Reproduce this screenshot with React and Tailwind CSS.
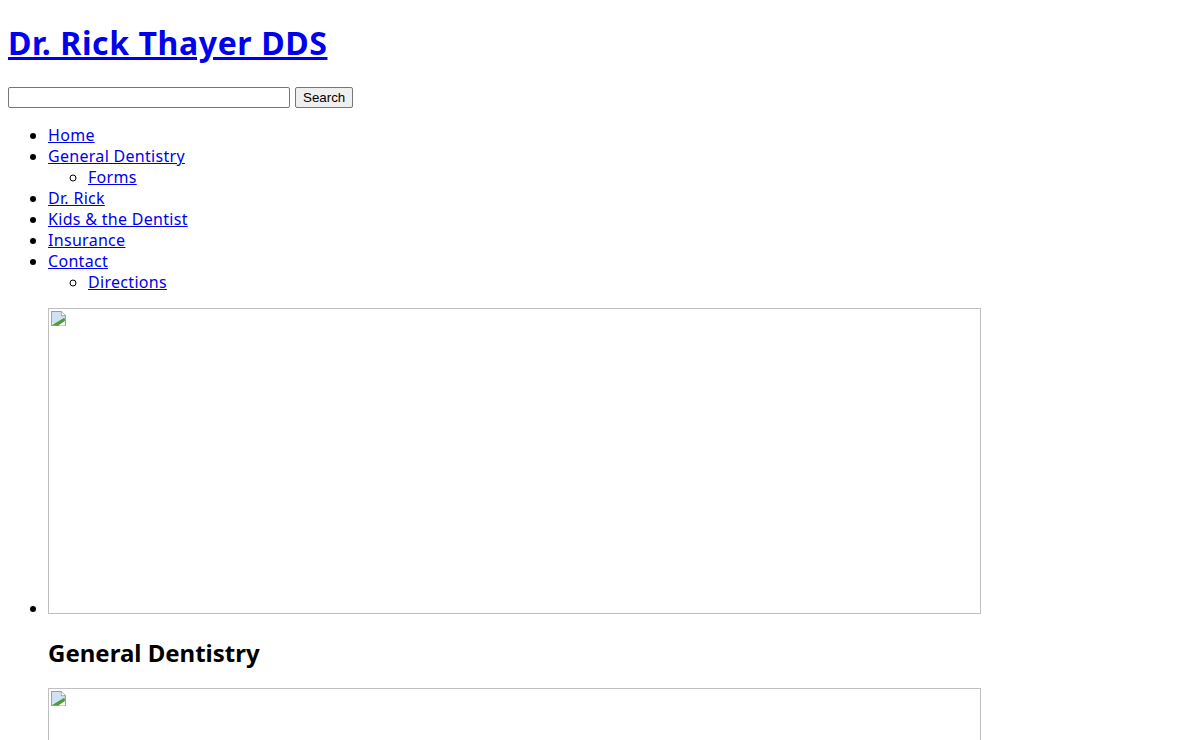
import React from "react";

const font = { fontFamily: "'Noto Sans', 'Open Sans', sans-serif" };

function BrokenImage() {
    return (
        <span className="inline-block align-baseline w-[933px] h-[306px] border border-[#c0c0c0] box-border">
            <svg width="17" height="17" viewBox="0 0 16 16" className="ml-[1px] mt-[1px]">
                <path d="M1.5 1.5h9l4 4v9h-13z" fill="#eef3f8" stroke="#9c9c9c" />
                <path d="M10.5 1.5v4h4" fill="#ffffff" stroke="#9c9c9c" />
                <path d="M2 2h8v4h4v4l-12 3z" fill="#cfe1f3" />
                <path d="M2 14l11-6.5 1 0.5v2.5l-6 4z" fill="#4f9b34" />
                <path d="M8 14.5l6-4v4z" fill="#ffffff" />
            </svg>
        </span>
    );
}

const menus = [
    { title: "Home" },
    { title: "General Dentistry", items: ["Forms"] },
    { title: "Dr. Rick" },
    { title: "Kids & the Dentist" },
    { title: "Insurance" },
    { title: "Contact", items: ["Directions"] },
];

function App() {
    return (
        <div className="m-2 text-black text-[16px] leading-[21px]" style={font}>
            {/* Header */}
            <h1 className="my-[21.44px] text-[32px] leading-[43px] font-bold tracking-[0.6px]">
                <a href="#" className="text-[#0000ee] underline">Dr. Rick Thayer DDS</a>
            </h1>

            <form className="flex items-center gap-[5px] py-[1px]">
                <input
                    type="text"
                    className="w-[282px] h-[21px] border border-[#767676] rounded-[2px] bg-white px-[2px]"
                />
                <button
                    type="button"
                    className="h-[21px] px-[7px] bg-[#efefef] border border-[#767676] rounded-[2px] text-[13.33px] leading-[15px] text-black"
                    style={{ fontFamily: "'Liberation Sans', Arial, sans-serif" }}
                >
                    Search
                </button>
            </form>

            {/* Menu */}
            <ul className="list-disc pl-10 mt-4 mb-[15px] tracking-[0.3px]">
                {menus.map((menu, index) => (
                    <li key={index}>
                        <a href="#" className="text-[#0000ee] underline">{menu.title}</a>
                        {menu.items && (
                            <ul className="list-[circle] pl-10">
                                {menu.items.map((item, i) => (
                                    <li key={i}>
                                        <a href="#" className="text-[#0000ee] underline">{item}</a>
                                    </li>
                                ))}
                            </ul>
                        )}
                    </li>
                ))}
            </ul>

            {/* Slider */}
            <ul className="list-disc pl-10 mt-[15px] mb-4">
                <li>
                    <BrokenImage />
                    <h2 className="mt-[18px] mb-[19px] text-[24px] leading-[32px] font-bold">General Dentistry</h2>
                    <BrokenImage />
                </li>
            </ul>
        </div>
    );
}

export default App;
